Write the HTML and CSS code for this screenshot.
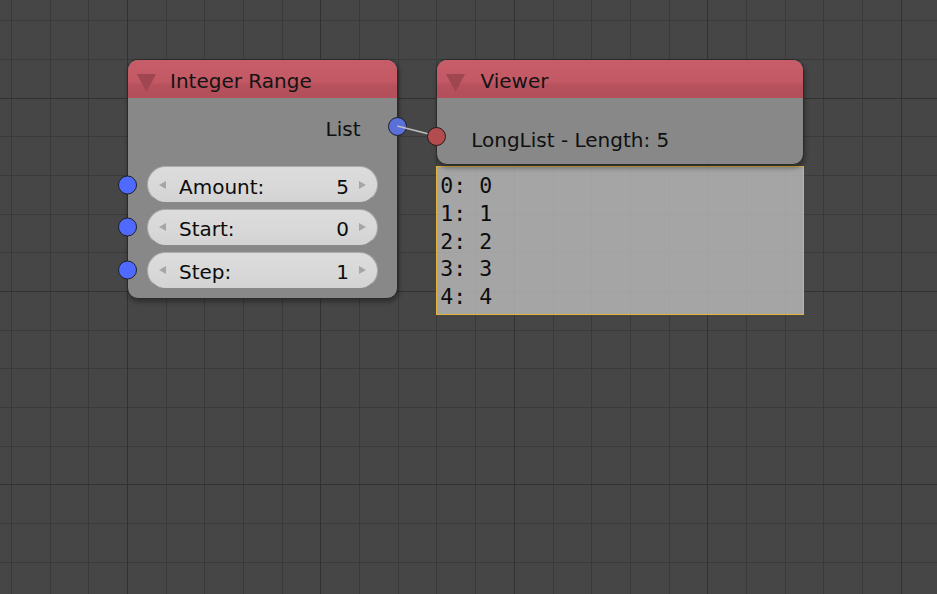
FILE: index.html
```html
<!DOCTYPE html>
<html lang="en">
<head>
<meta charset="utf-8">
<title>Node Editor</title>
<link rel="stylesheet" href="styles.css">
</head>
<body>
<div class="canvas">
  <div class="node node-range">
    <div class="node-header">
      <svg class="collapse" width="19" height="18" viewBox="0 0 19 18"><polygon points="0,0 19,0 9.5,18"/></svg>
      <span class="title">Integer Range</span>
    </div>
    <div class="range-body">
      <div class="output-row">
        <span class="out-label">List</span>
        <span class="socket socket-out"></span>
      </div>
      <div class="fields">
        <div class="field-row">
          <span class="socket socket-in"></span>
          <div class="field"><span class="arrow arrow-l"></span><span class="label">Amount:</span><span class="value">5</span><span class="arrow arrow-r"></span></div>
        </div>
        <div class="field-row">
          <span class="socket socket-in"></span>
          <div class="field"><span class="arrow arrow-l"></span><span class="label">Start:</span><span class="value">0</span><span class="arrow arrow-r"></span></div>
        </div>
        <div class="field-row">
          <span class="socket socket-in"></span>
          <div class="field"><span class="arrow arrow-l"></span><span class="label">Step:</span><span class="value">1</span><span class="arrow arrow-r"></span></div>
        </div>
      </div>
    </div>
  </div>

  <svg class="link" width="937" height="594" viewBox="0 0 937 594"><line x1="397.3" y1="126" x2="436.7" y2="136"/></svg>

  <div class="viewer-col">
    <div class="node node-viewer">
      <div class="node-header">
        <svg class="collapse" width="19" height="18" viewBox="0 0 19 18"><polygon points="0,0 19,0 9.5,18"/></svg>
        <span class="title title-viewer">Viewer</span>
      </div>
      <div class="viewer-body">
        <span class="socket socket-red"></span>
        <span class="viewer-text">LongList - Length: 5</span>
      </div>
    </div>
    <div class="text-box">
      <div class="line">0: 0</div>
      <div class="line">1: 1</div>
      <div class="line">2: 2</div>
      <div class="line">3: 3</div>
      <div class="line">4: 4</div>
    </div>
  </div>
</div>
</body>
</html>
```

FILE: styles.css
```css
* { box-sizing: border-box; }

html, body {
  margin: 0;
  padding: 0;
  background: #464646;
}

body {
  font-family: "DejaVu Sans", "Liberation Sans", sans-serif;
  font-size: 20px;
  color: #101010;
}

.canvas {
  position: relative;
  width: 937px;
  height: 594px;
  overflow: hidden;
  background-color: #464646;
  background-image:
    repeating-linear-gradient(to right, #323232 0, #323232 1px, transparent 1px, transparent 193.4px),
    repeating-linear-gradient(to bottom, #323232 0, #323232 1px, transparent 1px, transparent 193.4px),
    repeating-linear-gradient(to right, #3a3a3a 0, #3a3a3a 1px, transparent 1px, transparent 38.68px),
    repeating-linear-gradient(to bottom, #3a3a3a 0, #3a3a3a 1px, transparent 1px, transparent 38.68px);
  background-size: 1200px 800px;
  background-repeat: no-repeat;
  background-position: -66.4px 0, 0 -95.8px, -27.68px 0, 0 -18.48px;
}

/* ---------- nodes ---------- */
.node {
  position: absolute;
  background: #888888;
  border: 1px solid #2a2a2a;
  border-radius: 11px;
  box-shadow: 1px 3px 5px rgba(0, 0, 0, 0.35);
}

.node-range {
  left: 127px;
  top: 59px;
  width: 271px;
  height: 240px;
}

.node-header {
  display: flex;
  align-items: flex-start;
  height: 37.5px;
  padding: 10px 0 0 9px;
  border-radius: 10px 10px 0 0;
  background: linear-gradient(to bottom, #c75d69 0%, #c35965 58%, #b6515d 66%, #b24f5a 100%);
  line-height: 23px;
}

.collapse {
  flex: none;
  margin: 3.5px 14px 0 0;
  fill: #9f4650;
}

.title {
  color: #141414;
  white-space: nowrap;
}

.title-viewer {
  margin-left: 1.5px;
}

.range-body {
  padding: 20px 0 0;
}

.output-row {
  position: relative;
  display: flex;
  justify-content: flex-end;
  height: 23px;
  padding-right: 36.5px;
  line-height: 23px;
}

.fields {
  display: flex;
  flex-direction: column;
  gap: 5.8px;
  margin-top: 25.5px;
}

.field-row {
  position: relative;
  padding: 0 19px;
}

.field {
  display: flex;
  align-items: center;
  height: 37px;
  padding: 0 11px;
  border-radius: 19px;
  background: linear-gradient(to bottom, #dcdcdc 0%, #d8d8d8 60%, #d3d3d3 100%);
  border: 1px solid #ababab;
  border-bottom-color: #8a8a8a;
}

.field .label,
.field .value {
  padding-top: 5px;
  line-height: 23px;
  color: #0c0c0c;
}

.field .label { flex: 1; }

.arrow {
  flex: none;
  width: 0;
  height: 0;
  border-top: 4.5px solid transparent;
  border-bottom: 4.5px solid transparent;
}

.arrow-l {
  border-right: 7px solid #a6a6a6;
  margin-right: 13px;
}

.arrow-r {
  border-left: 7px solid #a6a6a6;
  margin-left: 10px;
}

/* ---------- sockets ---------- */
.socket {
  position: absolute;
  width: 19px;
  height: 19px;
  border-radius: 50%;
  border: 1px solid #1e1e2a;
}

.socket-in {
  left: -10.5px;
  top: 50%;
  transform: translateY(-50%);
  background: #4f6bff;
}

.socket-out {
  right: -9.8px;
  top: -1px;
  background: #5b6fd8;
}

.socket-red {
  left: -9.8px;
  top: 29px;
  background: #b34c4e;
  border-color: #2a1a1a;
}

/* ---------- link ---------- */
.link {
  position: absolute;
  left: 0;
  top: 0;
  pointer-events: none;
}

.link line {
  stroke: #bdbdbd;
  stroke-width: 1.4;
}

/* ---------- viewer ---------- */
.viewer-col {
  position: absolute;
  left: 436px;
  top: 59px;
  width: 368px;
  display: flex;
  flex-direction: column;
  gap: 1px;
}

.node-viewer {
  position: relative;
  height: 106px;
}

.viewer-body {
  position: relative;
  padding: 31.5px 0 0 34.2px;
  line-height: 23px;
}

.viewer-text {
  white-space: nowrap;
}

.text-box {
  height: 149px;
  padding: 5px 0 0 3.3px;
  border: 1px solid #e4b33c;
  background: rgba(192, 192, 192, 0.78);
  font-family: "DejaVu Sans Mono", "Liberation Mono", monospace;
  font-size: 21.5px;
  line-height: 27.75px;
  color: #0c0c0c;
}

.line {
  white-space: pre;
}
```
